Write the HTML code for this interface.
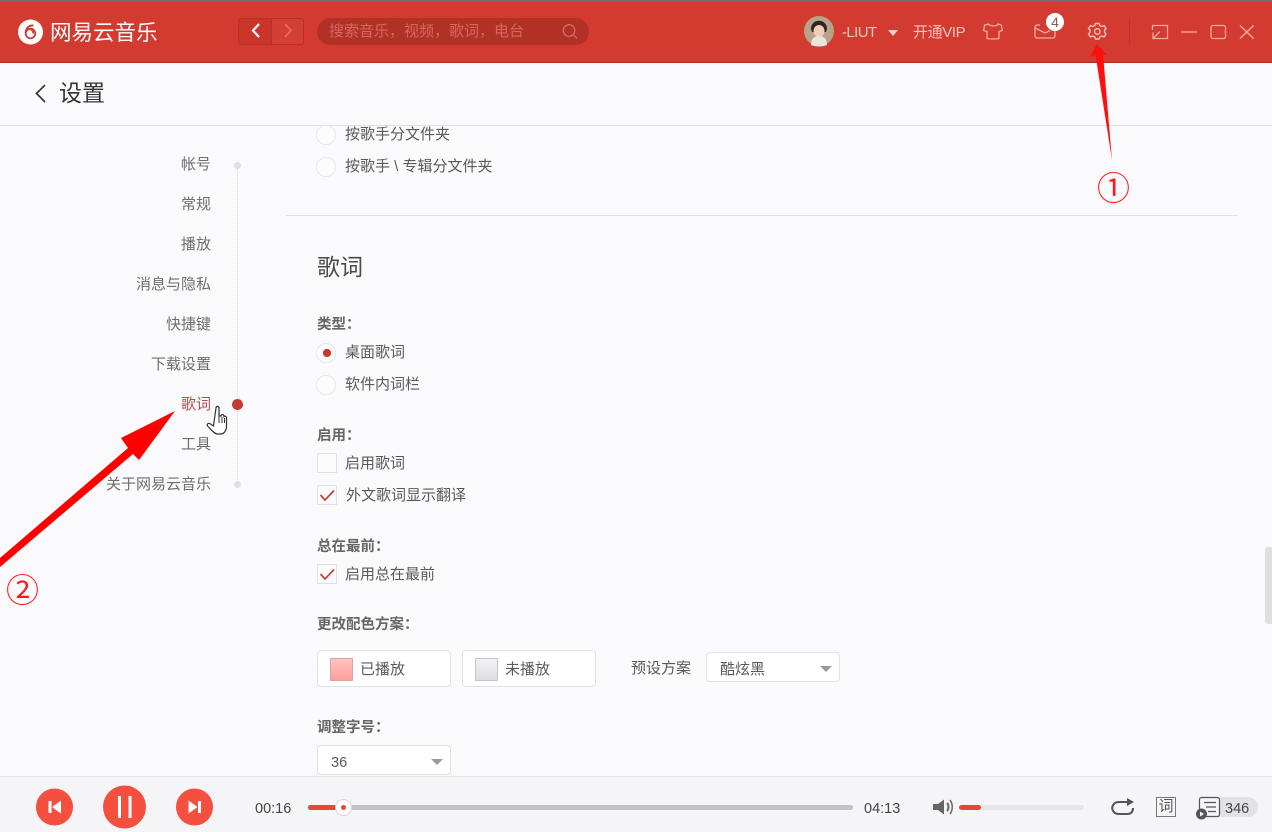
<!DOCTYPE html>
<html lang="zh"><head><meta charset="utf-8"><title>设置</title>
<style>
*{box-sizing:border-box}
html,body{margin:0;padding:0;width:1272px;height:832px;overflow:hidden;background:#fafafc;font-family:"Liberation Sans","Noto Sans CJK SC",sans-serif}
.t{position:absolute;white-space:nowrap;line-height:20px;font-size:15px;color:#5a5a5a;margin-top:1px}
.nav{right:1061px;color:#6e6e6e}
.b{font-weight:700;font-size:14.5px;color:#666;margin-top:0}
.r{position:absolute;left:316px;width:20px;height:20px;border-radius:50%;border:1px solid #e6e6e7;background:#fcfcfd}
.c{position:absolute;left:317px;width:20px;height:20px;border:1px solid #e1e1e2;background:#fcfcfd}
.box{position:absolute;background:#fff;border:1px solid #e2e2e6;border-radius:4px}
.dd{position:absolute;width:0;height:0;border-left:6.500px solid transparent;border-right:6.500px solid transparent;border-top:6.500px solid #9a9a9a}
svg{position:absolute;overflow:visible}
</style></head><body>
<div style="position:absolute;left:0;top:0;width:1272px;height:63px;background:#d33b30;border-top:2px solid #7b6a6a;border-bottom:1px solid #b12a1b"></div>

<svg style="left:0;top:0" width="200" height="63" viewBox="0 0 200 63">
<circle cx="30.500" cy="32" r="12.500" fill="#fff"/>
<circle cx="30.500" cy="33.500" r="4.800" fill="none" stroke="#d33b30" stroke-width="1.800"/>
<path d="M33.500 25.500c-4-.5-7.500 2-8 7M33 33.500c.5-2-.5-4-3-4.300" fill="none" stroke="#d33b30" stroke-width="1.800"/>
</svg>
<div class="t" style="left:50px;top:20px;font-size:21.500px;line-height:24px;color:#fff">网易云音乐</div>

<div style="position:absolute;left:238px;top:18px;width:66px;height:27px;background:#c93528;border:1px solid #b93024;border-radius:3px"></div>
<div style="position:absolute;left:271px;top:19px;width:32px;height:25px;background:#d33f33;border-left:1px solid #b93024;border-radius:0 3px 3px 0"></div>
<svg style="left:0;top:0" width="310" height="63"><path d="M259 24l-6 6.500 6 6.500" fill="none" stroke="#fff" stroke-width="2.200"/><path d="M285 24l6 6.500-6 6.500" fill="none" stroke="#e2675d" stroke-width="2"/></svg>

<div style="position:absolute;left:317px;top:18px;width:272px;height:27px;border-radius:14px;background:#b23126"></div>
<div class="t" style="left:329px;top:21px;color:#d4695f">搜索音乐，视频，歌词，电台</div>
<svg style="left:0;top:0" width="600" height="63"><circle cx="569" cy="30.500" r="5.800" fill="none" stroke="#d9766d" stroke-width="1.100"/><path d="M573 34.500l4 4" stroke="#d9766d" stroke-width="1.100"/></svg>

<!-- avatar -->
<svg style="left:804px;top:16px" width="30" height="30" viewBox="0 0 30 30">
<circle cx="15" cy="15" r="15" fill="#b8a28a"/><path d="M7 13c0-11 16-11 16 0l-1 3H8z" fill="#2f2422"/><ellipse cx="15" cy="15" rx="5.500" ry="6" fill="#f0cdb8"/><path d="M7 29c0-6 3-9 8-9s8 3 8 9c-4 2-12 2-16 0z" fill="#ece4da"/>
</svg>
<div class="t" style="left:842px;top:22px;color:#f3c5c0;letter-spacing:-.6px">-LIUT</div>
<div style="position:absolute;left:888px;top:30px;border-left:5.500px solid transparent;border-right:5.500px solid transparent;border-top:6px solid #f5d3cf"></div>
<div class="t" style="left:913px;top:22px;color:#f3c5c0;letter-spacing:-.4px">开通VIP</div>

<svg style="left:0;top:0" width="1272" height="63" fill="none" stroke="#f0aaa3" stroke-width="1.300">
<path d="M988 24l-3.500 1.200-.8 5.300 3.300 1V38.500c3 .6 9 .6 12 0V31.500l3.300-1-.8-5.300-3.500-1.200c-1 2.500-7.500 2.500-10 0z"/>
<path d="M1040 25h-3c-1 0-2 1-2 2v9c0 1 1 2 2 2h16c1 0 2-1 2-2v-5"/><path d="M1035 28l10 5 5-2.500"/>
<path stroke="#f5c1bc" stroke-width="1.400" d="M1095.500 23.500h3.500l.8 2.100 2.200.9 2-1 2 3-1.500 1.600v2.300l1.500 1.600-2 3-2-1-2.200.9-.8 2.100h-3.500l-.8-2.100-2.200-.9-2 1-2-3 1.500-1.600v-2.300l-1.500-1.600 2-3 2 1 2.200-.9z"/><circle cx="1097.300" cy="31.500" r="2.800" stroke="#f5c1bc" stroke-width="1.400"/>
<path d="M1152.500 30v-4.500h15v13H1158"/><path d="M1160 31.500l-6.500 6.500M1153 32.500v6h6"/>
<path d="M1181 32h16"/>
<rect x="1211" y="25.500" width="14.500" height="13" rx="2"/>
<path d="M1240 25.500l13.500 13M1253.500 25.500l-13.500 13" stroke-width="1.500"/>
</svg>
<div style="position:absolute;left:1129px;top:19px;width:1px;height:25px;background:#bd3328"></div>
<div style="position:absolute;left:1046px;top:13px;width:18px;height:18px;border-radius:50%;background:#fff;color:#8a5a56;font-size:14px;line-height:18px;text-align:center">4</div>

<!-- title bar -->
<svg style="left:0;top:0" width="60" height="110"><path d="M45 85l-8.500 8.500 8.500 8.500" fill="none" stroke="#333" stroke-width="1.600"/></svg>
<div class="t" style="left:59px;top:79px;margin-top:0;font-size:23px;line-height:29px;color:#333">设置</div>
<div style="position:absolute;left:0;top:125px;width:1272px;height:1px;background:#e1e1e2"></div>

<!-- nav -->
<div style="position:absolute;left:237px;top:166px;height:318px;border-left:1px dotted #d8d8d8"></div>
<div style="position:absolute;left:234px;top:162px;width:7px;height:7px;border-radius:50%;background:#e0e0e2"></div>
<div style="position:absolute;left:234px;top:481px;width:7px;height:7px;border-radius:50%;background:#e0e0e2"></div>
<div style="position:absolute;left:232px;top:399px;width:11px;height:11px;border-radius:50%;background:#c23a32"></div>
<div class="t nav" style="top:154px">帐号</div>
<div class="t nav" style="top:194px">常规</div>
<div class="t nav" style="top:234px">播放</div>
<div class="t nav" style="top:274px">消息与隐私</div>
<div class="t nav" style="top:314px">快捷键</div>
<div class="t nav" style="top:354px">下载设置</div>
<div class="t nav" style="top:394px;color:#b4504a">歌词</div>
<div class="t nav" style="top:434px">工具</div>
<div class="t nav" style="top:474px">关于网易云音乐</div>

<!-- section top -->
<div class="r" style="top:125px"></div>
<div class="t" style="left:345px;top:124px">按歌手分文件夹</div>
<div class="r" style="top:157px"></div>
<div class="t" style="left:345px;top:156px">按歌手 \ 专辑分文件夹</div>
<div style="position:absolute;left:286px;top:215px;width:952px;height:1px;background:#e1e1e2"></div>

<div class="t" style="left:317px;top:252px;margin-top:0;font-size:23px;line-height:30px;color:#4a4a4a">歌词</div>

<div class="t b" style="left:317px;top:315px">类型：</div>
<div class="r" style="top:343px"></div>
<div style="position:absolute;left:323px;top:349px;width:7.500px;height:7.500px;border-radius:50%;background:#c9372d"></div>
<div class="t" style="left:345px;top:342px">桌面歌词</div>
<div class="r" style="top:375px"></div>
<div class="t" style="left:345px;top:374px">软件内词栏</div>

<div class="t b" style="left:317px;top:426px">启用：</div>
<div class="c" style="top:453px"></div>
<div class="t" style="left:345px;top:453px">启用歌词</div>
<div class="c" style="top:485px"></div>
<svg style="left:317px;top:485px" width="20" height="20"><path d="M3.500 10l4.500 5 9-9.500" fill="none" stroke="#c2413a" stroke-width="1.700"/></svg>
<div class="t" style="left:346px;top:485px">外文歌词显示翻译</div>

<div class="t b" style="left:317px;top:537px">总在最前：</div>
<div class="c" style="top:564px"></div>
<svg style="left:317px;top:564px" width="20" height="20"><path d="M3.500 10l4.500 5 9-9.500" fill="none" stroke="#c2413a" stroke-width="1.700"/></svg>
<div class="t" style="left:345px;top:564px">启用总在最前</div>

<div class="t b" style="left:317px;top:615px">更改配色方案：</div>
<div class="box" style="left:317px;top:650px;width:134px;height:37px"></div>
<div style="position:absolute;left:330px;top:658px;width:23px;height:23px;border:1px solid #d9a5a3;background:linear-gradient(#ffc4c0,#ff9f9a)"></div>
<div class="t" style="left:360px;top:659px">已播放</div>
<div class="box" style="left:462px;top:650px;width:134px;height:37px"></div>
<div style="position:absolute;left:475px;top:658px;width:23px;height:23px;border:1px solid #c5c5c8;background:linear-gradient(#f4f4f7,#dcdce2)"></div>
<div class="t" style="left:505px;top:659px">未播放</div>
<div class="t" style="left:631px;top:658px">预设方案</div>
<div class="box" style="left:706px;top:652px;width:134px;height:30px"></div>
<div class="t" style="left:720px;top:659px">酷炫黑</div>
<div class="dd" style="left:820px;top:666px"></div>

<div class="t b" style="left:317px;top:718px">调整字号：</div>
<div class="box" style="left:317px;top:745px;width:134px;height:30px"></div>
<div class="t" style="left:331px;top:752px;font-size:14.500px">36</div>
<div class="dd" style="left:431px;top:759px"></div>

<div style="position:absolute;left:1265px;top:547px;width:7px;height:77px;background:#e0dfe0;border-radius:3px 0 0 3px"></div>

<!-- player -->
<div style="position:absolute;left:0;top:776px;width:1272px;height:56px;background:#f5f5f8;border-top:1px solid #e1e1e8"></div>
<svg style="left:0;top:770px" width="230" height="62">
<circle cx="54.500" cy="37" r="18.500" fill="#f54f3f"/><circle cx="124.500" cy="37" r="21.500" fill="#f54f3f"/><circle cx="194.500" cy="37" r="18.500" fill="#f54f3f"/>
<path d="M48.500 31h3v12h-3zM61 30.500v13l-9-6.500z" fill="#fff"/>
<path d="M118 26h3v22h-3zM128.500 26h3v22h-3z" fill="#fff"/>
<path d="M188.500 30.500v13l9-6.500zM198 31h3v12h-3z" fill="#fff"/>
</svg>
<div class="t" style="left:255px;top:798px;color:#444;font-size:14.500px">00:16</div>
<div style="position:absolute;left:308px;top:805px;width:545px;height:5px;border-radius:3px;background:#c3c3c6"></div>
<div style="position:absolute;left:308px;top:805px;width:30px;height:5px;border-radius:3px;background:#e8463a"></div>
<div style="position:absolute;left:335px;top:799px;width:17px;height:17px;border-radius:50%;background:#fff;border:1px solid #d8d8da"></div>
<div style="position:absolute;left:341px;top:805px;width:5px;height:5px;border-radius:50%;background:#e8463a"></div>
<div class="t" style="left:864px;top:798px;color:#444;font-size:14.500px">04:13</div>
<svg style="left:930px;top:795px" width="26" height="24"><path d="M3 9h5l6-4.500v15L8 15H3z" fill="#666"/><path d="M17 8c2 2 2 6 0 8" fill="none" stroke="#666" stroke-width="2"/><path d="M20 5c3 4 3 10 0 14" fill="none" stroke="#666" stroke-width="1.500"/></svg>
<div style="position:absolute;left:959px;top:805px;width:125px;height:5px;border-radius:3px;background:#e6e6e9"></div>
<div style="position:absolute;left:959px;top:805px;width:22px;height:5px;border-radius:3px;background:#e8463a"></div>
<svg style="left:0;top:0" width="1272" height="832" fill="none" stroke="#555" stroke-width="2"><path d="M1131 802h-12c-9 0-9 12 0 12h8c4 0 6-2 6-6"/><path d="M1127 798l7 4-7 4z" fill="#555" stroke="none"/></svg>
<div style="position:absolute;left:1156px;top:797px;width:20px;height:20px;border:1px solid #777;color:#555;font-size:15px;line-height:18px;text-align:center">词</div>
<div style="position:absolute;left:1205px;top:797px;width:53px;height:20px;border-radius:0 10px 10px 0;background:#e2e2e5"></div>
<svg style="left:1195px;top:795px" width="30" height="26"><rect x="4.500" y="2.500" width="20" height="19" rx="2" fill="#f5f5f8" stroke="#555" stroke-width="1.200"/><path d="M9 7.500h12M11 12h10M13 16.500h8" stroke="#555" stroke-width="1.200"/><circle cx="6.500" cy="19" r="5.500" fill="#555"/><path d="M5 16.500v5l4-2.500z" fill="#f5f5f8"/></svg>
<div class="t" style="left:1225px;top:798px;color:#444;font-size:14.500px">346</div>

<!-- annotations -->
<svg style="left:0;top:0" width="1272" height="832">
<path d="M1097 44L1089.500 57 1095.500 55 1112 160 1103 54 1107.500 55.500z" fill="#ff1010"/>
<path d="M175 411L121 438 128 448 0 558 0 567 133 454 139 460z" fill="#ff0000"/>
</svg>
<div class="t" style="left:1097px;top:170px;font-size:33px;line-height:36px;color:#ff1a1a">①</div>
<div class="t" style="left:6px;top:572px;font-size:33px;line-height:36px;color:#ff1a1a">②</div>
<svg style="left:205px;top:405px" width="24" height="32"><path d="M11 3c0-2 3-2 3 0v8h2c0-2 3-2 3 .5 1-1 2.500 0 2.500 1.500v8c0 4-2 8-6 8h-3c-3 0-6-4-10-8-1-2 1-3.500 3-2l3 2z" fill="#fff" stroke="#333" stroke-width="1.200"/><path d="M14 11v7M17 12v6M19.500 13v5" stroke="#333" stroke-width="1"/></svg>
</body></html>
